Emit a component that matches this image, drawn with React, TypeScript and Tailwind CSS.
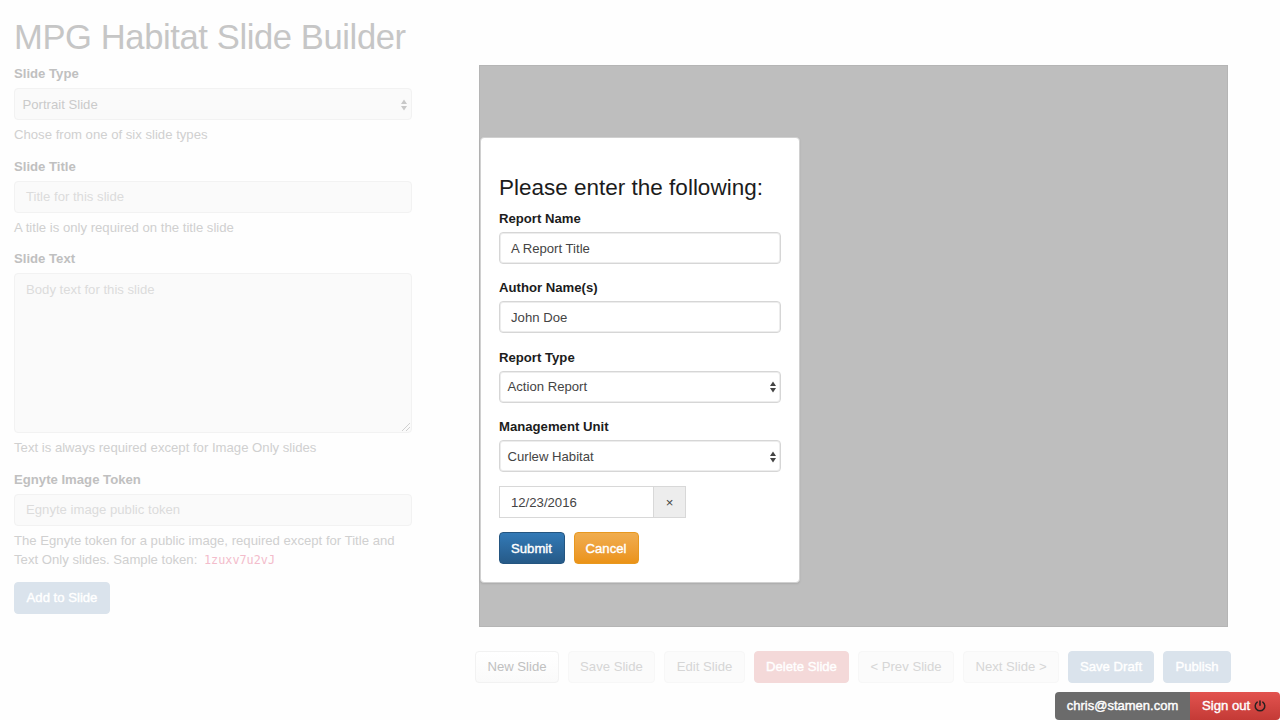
import type { ReactNode } from "react";

function Arrows({ className }: { className: string }) {
  return (
    <svg viewBox="0 0 6 12" className={`h-3 w-1.5 shrink-0 ${className}`} fill="currentColor">
      <path d="M3 .5 6 5H0zM3 11.5 0 7h6z" />
    </svg>
  );
}

function Field({ label, help, children }: { label: string; help: ReactNode; children: ReactNode }) {
  return (
    <div className="mb-[13.6px]">
      <div className="mb-[5px] h-[18px] font-bold leading-[18px] text-[#c0c0c0]">{label}</div>
      {children}
      <div className="mt-[5px] leading-[19px] text-[#d0d0d0]">{help}</div>
    </div>
  );
}

const fadedBox = "flex h-8 w-full items-center rounded-[4px] border border-[#f2f2f2] bg-[#fafafa] pt-px";
const modalBox =
  "flex h-8 w-full items-center rounded-[4px] border border-[#d6d6d6] bg-white pt-px text-[#444] shadow-[inset_0_0_0_1px_#ededed]";

function ModalField({ label, children }: { label: string; children: ReactNode }) {
  return (
    <div className="h-[69.4px]">
      <div className="mb-[4px] h-[19px] font-bold leading-[19px] text-[#1c1c1c]">{label}</div>
      {children}
    </div>
  );
}

const tool = "flex h-8 items-center justify-center rounded-[4px] border";
const mutedTool = "border-[#f7f7f7] bg-[#fbfbfb] text-[#d6d6d6]";
const blueTool = "border-[#dae3ec] bg-[#dae3ec] text-white [-webkit-text-stroke:0.4px_white]";

export default function App() {
  return (
    <div className="relative flex h-[720px] w-[1280px] flex-col overflow-hidden bg-[#fefefe] font-['Liberation_Sans',Arial,sans-serif] text-[13.15px]">
      <h1 className="ml-[14px] mt-[17px] h-[40px] whitespace-nowrap text-[34.6px] leading-[40px] tracking-[-0.4px] text-[#c6c6c6]">
        MPG Habitat Slide Builder
      </h1>
      <div className="mt-[8px] flex">
        <section className="ml-[14px] w-[398px]">
          <Field label="Slide Type" help="Chose from one of six slide types">
            <div className={`${fadedBox} justify-between pl-[7.5px] pr-[4px] text-[#cacaca]`}>
              <span>Portrait Slide</span>
              <Arrows className="text-[#c8c8c8]" />
            </div>
          </Field>
          <Field label="Slide Title" help="A title is only required on the title slide">
            <div className={`${fadedBox} px-[11px] text-[#dcdcdc]`}>Title for this slide</div>
          </Field>
          <Field label="Slide Text" help="Text is always required except for Image Only slides">
            <div className="flex h-[160px] flex-col justify-between rounded-[4px] border border-[#f2f2f2] bg-[#fafafa]">
              <span className="pl-[11px] pt-[6px] leading-[19px] text-[#dcdcdc]">Body text for this slide</span>
              <svg viewBox="0 0 10 10" className="h-[10px] w-[10px] self-end" stroke="#d0d0d0" strokeWidth="1" fill="none">
                <path d="M1 9 9 1M5 9 9 5" />
              </svg>
            </div>
          </Field>
          <Field
            label="Egnyte Image Token"
            help={
              <>
                The Egnyte token for a public image, required except for Title and
                <br />
                Text Only slides. Sample token:{" "}
                <code className="ml-[3px] font-['DejaVu_Sans_Mono',monospace] text-[11.8px] leading-none text-[#f3bccb]">1zuxv7u2vJ</code>
              </>
            }
          >
            <div className={`${fadedBox} px-[11px] text-[#dcdcdc]`}>Egnyte image public token</div>
          </Field>
          <button className={`${tool} ${blueTool} -mt-[0.4px] w-24`}>Add to Slide</button>
        </section>

        <section className="ml-[63px]">
          <div className="ml-[4px] h-[562px] w-[749px] border border-[#b5b5b5] bg-[#bebebe] pt-[71px]">
            <div className="h-[446px] w-[320px] rounded-[4px] border border-[#d0d0d0] bg-white px-[18px] shadow-[0_1px_2px_rgba(0,0,0,0.1)]">
              <h2 className="mb-[7px] mt-[36px] h-[28px] whitespace-nowrap text-[22.5px] leading-[28px] text-[#1c1c1c]">
                Please enter the following:
              </h2>
              <div className="w-[282px]">
                <ModalField label="Report Name">
                  <div className={`${modalBox} px-[11px]`}>A Report Title</div>
                </ModalField>
                <ModalField label="Author Name(s)">
                  <div className={`${modalBox} px-[11px]`}>John Doe</div>
                </ModalField>
                <ModalField label="Report Type">
                  <div className={`${modalBox} justify-between pl-[7.5px] pr-[4px]`}>
                    <span>Action Report</span>
                    <Arrows className="text-[#444]" />
                  </div>
                </ModalField>
                <ModalField label="Management Unit">
                  <div className={`${modalBox} justify-between pl-[7.5px] pr-[4px]`}>
                    <span>Curlew Habitat</span>
                    <Arrows className="text-[#444]" />
                  </div>
                </ModalField>
              </div>
              <div className="-mt-[0.6px] flex h-8 w-[187px] border border-[#d8d8d8] text-[#444]">
                <span className="flex flex-1 items-center border-r border-[#d8d8d8] pl-[11px] pt-px">12/23/2016</span>
                <span className="flex w-[31px] items-center justify-center bg-[#ededed] pt-[2px]">×</span>
              </div>
              <div className="mt-[14px] flex gap-[9px] text-white [-webkit-text-stroke:0.4px_white]">
                <button className="h-8 w-[66px] rounded-[4px] border border-[#245580] bg-linear-to-b from-[#337ab7] to-[#265a88] pr-px pt-px">Submit</button>
                <button className="h-8 w-[65px] rounded-[4px] border border-[#e8981f] bg-linear-to-b from-[#f0ad4e] to-[#eb9316] pr-px pt-px">Cancel</button>
              </div>
            </div>
          </div>
          <div className="mt-[24px] flex w-[757px] gap-[9px]">
            <button className={`${tool} w-[84px] border-[#f2f2f2] bg-linear-to-b from-white to-[#fafafa] text-[#c0c0c0]`}>New Slide</button>
            <button className={`${tool} ${mutedTool} w-[87px]`}>Save Slide</button>
            <button className={`${tool} ${mutedTool} w-[81px]`}>Edit Slide</button>
            <button className={`${tool} w-[95px] border-[#f4d9d9] bg-[#f4d9d9] text-white [-webkit-text-stroke:0.4px_white]`}>Delete Slide</button>
            <button className={`${tool} ${mutedTool} w-[96px]`}>&lt; Prev Slide</button>
            <button className={`${tool} ${mutedTool} w-[96px]`}>Next Slide &gt;</button>
            <button className={`${tool} ${blueTool} w-[86px]`}>Save Draft</button>
            <button className={`${tool} ${blueTool} w-[68px]`}>Publish</button>
          </div>
        </section>
      </div>
      <div className="absolute bottom-0 right-0 flex h-7 w-[225px] overflow-hidden rounded-[4px] text-white [-webkit-text-stroke:0.4px_white]">
        <span className="flex w-[135px] items-center justify-center bg-[#6b6b6b] text-[13px]">chris@stamen.com</span>
        <button className="flex flex-1 items-center gap-[4px] bg-linear-to-b from-[#e2534f] to-[#c43a36] pl-[12px]">
          Sign out
          <svg viewBox="0 0 12 12" className="h-3 w-3" fill="none" stroke="#2a2020" strokeWidth="1.5" strokeLinecap="round">
            <path d="M3.2 2.1a4.8 4.8 0 1 0 5.6 0M6 .9v4.4" />
          </svg>
        </button>
      </div>
    </div>
  );
}
